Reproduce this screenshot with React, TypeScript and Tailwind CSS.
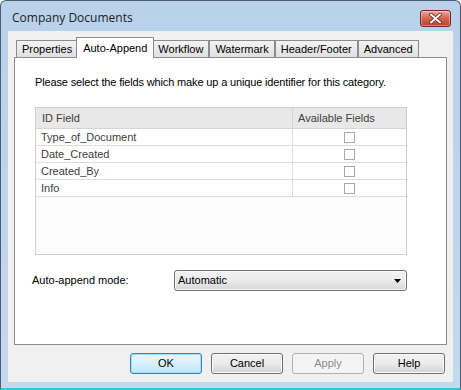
import React from "react";

const tabs = ["Properties", "Auto-Append", "Workflow", "Watermark", "Header/Footer", "Advanced"];
const fields = ["Type_of_Document", "Date_Created", "Created_By", "Info"];

function CloseButton() {
  return (
    <div className="mt-[9px] mr-[2px] flex h-[17px] w-[31px] items-center justify-center rounded-[3px] border border-[#6b2a20] bg-gradient-to-b from-[#e9a99c] via-[#d2624c] to-[#c0422c] shadow-[inset_0_0_0_1px_rgba(255,255,255,0.35)]">
      <svg width="13" height="11" viewBox="0 0 13 11">
        <path
          d="M2 1.5 L6.5 5.5 L11 1.5 M2 9.5 L6.5 5.5 L11 9.5"
          stroke="#5a2a22"
          strokeWidth="3.6"
          fill="none"
          strokeLinecap="round"
        />
        <path
          d="M2 1.5 L6.5 5.5 L11 1.5 M2 9.5 L6.5 5.5 L11 9.5"
          stroke="#ffffff"
          strokeWidth="2"
          fill="none"
          strokeLinecap="round"
        />
      </svg>
    </div>
  );
}

function Tab({ label, active }: { label: string; active: boolean }) {
  if (active) {
    return (
      <div className="relative z-10 -mx-[2px] -mb-px flex h-[21px] items-start border border-b-0 border-[#898c95] bg-white px-[6px] pt-[2px]">
        {label}
      </div>
    );
  }
  return (
    <div className="flex h-[17px] items-center border border-b-0 border-[#898c95] bg-gradient-to-b from-[#f3f3f3] to-[#e0e0e0] px-[5px] pt-px">
      {label}
    </div>
  );
}

function DialogButton({
  label,
  isDefault,
  disabled,
}: {
  label: string;
  isDefault?: boolean;
  disabled?: boolean;
}) {
  if (disabled) {
    return (
      <button className="h-[21px] w-[72px] rounded-[3px] border border-[#adb2b5] bg-[#f4f4f4] text-[#8d8d8d]">
        {label}
      </button>
    );
  }
  return (
    <button
      className={
        isDefault
          ? "h-[21px] w-[72px] rounded-[3px] border border-[#3c7fb1] bg-gradient-to-b from-[#eaf6fd] via-[#d9f0fc] to-[#bee6fd] text-black shadow-[inset_0_0_0_1px_#9fe0f8]"
          : "h-[21px] w-[72px] rounded-[3px] border border-[#707070] bg-gradient-to-b from-[#f2f2f2] via-[#ebebeb] to-[#d2d2d2] text-black shadow-[inset_0_0_0_1px_#fcfcfc]"
      }
    >
      {label}
    </button>
  );
}

export default function App() {
  return (
    <div className="h-[390px] w-[461px] overflow-hidden font-['Liberation_Sans',Arial,sans-serif] text-[11px] text-black">
      <div className="flex h-full w-full flex-col rounded-t-[6px] border border-b-2 border-[#4d5d70] border-b-[#3cc3d6] bg-gradient-to-b from-[#b9d1ea] to-[#c4d8ee] px-[7px] pb-[6px]">
        <div className="flex h-[30px] shrink-0 items-start justify-between">
          <span className="pl-[4px] pt-[8px] font-['Open_Sans',sans-serif] text-[12px] text-[#1e1e1e]">
            Company Documents
          </span>
          <CloseButton />
        </div>

        <div className="flex flex-1 flex-col bg-[#f0f0f0]">
          <div className="flex flex-col px-[6px] pt-[6px]">
            <div className="flex h-[20px] items-end pl-[2px]">
              {tabs.map((t) => (
                <Tab key={t} label={t} active={t === "Auto-Append"} />
              ))}
            </div>
            <div className="flex h-[288px] flex-col border border-[#898c95] bg-white px-[20px]">
              <p className="pt-[17px] leading-[14px] tracking-[-0.15px]">
                Please select the fields which make up a unique identifier for this category.
              </p>

              <div className="mt-[18px] flex h-[148px] w-[372px] flex-col border border-[#cfcfcf] bg-[#fcfcfc] text-[#404040]">
                <div className="flex h-[21px] border-b border-[#d5d5d5] bg-[#e8e8e8]">
                  <div className="flex w-[257px] items-center border-r border-[#d5d5d5] pl-[6px]">
                    ID Field
                  </div>
                  <div className="flex flex-1 items-center pl-[5px]">Available Fields</div>
                </div>
                {fields.map((f) => (
                  <div key={f} className="flex h-[17px] border-b border-[#dcdcdc] bg-white">
                    <div className="flex w-[257px] items-center border-r border-[#dcdcdc] pl-[5px]">
                      {f}
                    </div>
                    <div className="flex flex-1 items-center justify-center">
                      <div className="h-[11px] w-[11px] border border-[#a8a8a8] bg-white" />
                    </div>
                  </div>
                ))}
              </div>

              <div className="mt-[15px] flex items-center">
                <span className="-ml-[3px] w-[142px]">Auto-append mode:</span>
                <div className="flex h-[21px] w-[233px] items-center justify-between rounded-[3px] border border-[#707070] bg-gradient-to-b from-[#f2f2f2] via-[#ebebeb] to-[#d6d6d6] pl-[3px] pr-[5px] shadow-[inset_0_0_0_1px_#fafafa]">
                  <span>Automatic</span>
                  <svg width="7" height="4" viewBox="0 0 7 4">
                    <path d="M0 0 H7 L3.5 4 Z" fill="#000" />
                  </svg>
                </div>
              </div>
            </div>
          </div>

          <div className="flex justify-end gap-[9px] pr-[8px] pt-[8px]">
            <DialogButton label="OK" isDefault />
            <DialogButton label="Cancel" />
            <DialogButton label="Apply" disabled />
            <DialogButton label="Help" />
          </div>
        </div>
      </div>
    </div>
  );
}
